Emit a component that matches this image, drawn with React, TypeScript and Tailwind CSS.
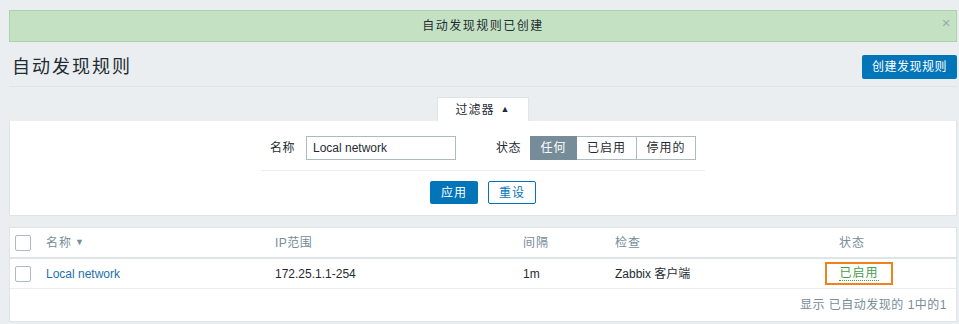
import React from "react";

const font = "font-['Liberation_Sans','Noto_Sans_CJK_SC',sans-serif]";

const Checkbox: React.FC = () => (
  <span className="block w-[16px] h-[16px] border border-[#acbbc2] rounded-[2px] bg-white" />
);

export default function App() {
  return (
    <div className={`${font} min-h-screen w-[959px] bg-[#ebeef0] pl-[9px] pr-[2px] pt-[10px] text-[12px] text-[#1f2c33]`}>
      {/* success message */}
      <div className="relative flex h-[32px] items-center justify-center border border-[#a9d3a8] bg-[#c4e2c3] tracking-[1.5px]">
        自动发现规则已创建
        <span className="absolute right-[4px] top-[4px] text-[15px] leading-none text-[#9aaba5]">×</span>
      </div>

      {/* header */}
      <div className="flex items-center justify-between border-b border-[#dfe4e7] pb-[7px] pt-[13px]">
        <h1 className="pl-[3px] text-[18px] leading-[24px] tracking-[2px]">自动发现规则</h1>
        <button className="h-[24px] w-[95px] rounded-[2px] bg-[#0275b8] text-[12px] tracking-[0.5px] text-white">
          创建发现规则
        </button>
      </div>

      {/* filter tab */}
      <div className="mt-[10px] flex justify-center">
        <div className="flex h-[24px] w-[92px] items-center justify-center gap-[6px] border border-b-0 border-[#dfe4e7] bg-white tracking-[1px]">
          过滤器 <span className="text-[9px]">▲</span>
        </div>
      </div>

      {/* filter panel */}
      <div className="flex flex-col items-center border border-t-0 border-[#dfe4e7] bg-white pb-[11px] pt-[15px]">
        <div className="flex h-[24px] items-center">
          <span className="tracking-[0.5px]">名称</span>
          <div className="ml-[11px] flex h-[24px] w-[150px] items-center border border-[#acbbc2] pl-[6px]">
            Local network
          </div>
          <span className="ml-[40px] tracking-[0.5px]">状态</span>
          <div className="ml-[9px] flex h-[24px]">
            <span className="flex w-[47px] items-center justify-center border border-[#768d99] bg-[#768d99] tracking-[1px] text-white">任何</span>
            <span className="flex w-[60px] items-center justify-center border border-l-0 border-[#acbbc2] tracking-[1px]">已启用</span>
            <span className="flex w-[59px] items-center justify-center border border-l-0 border-[#acbbc2] tracking-[1px]">停用的</span>
          </div>
        </div>
        <div className="mt-[10px] h-px w-[444px] bg-[#ebeef0]" />
        <div className="mt-[10px] flex gap-[10px]">
          <button className="h-[23px] w-[48px] rounded-[2px] bg-[#0275b8] tracking-[1px] text-white">应用</button>
          <button className="h-[23px] w-[48px] rounded-[2px] border border-[#0275b8] bg-white tracking-[1px] text-[#0275b8]">重设</button>
        </div>
      </div>

      {/* table */}
      <div className="mt-[11px] border border-[#dfe4e7] bg-white">
        <div className="grid h-[31px] grid-cols-[36px_229px_248px_92px_180px_114px_1fr] items-center border-b-2 border-[#dfe4e7] text-[#768d99]">
          <div className="pl-[5px]"><Checkbox /></div>
          <div className="flex items-center gap-[3px] tracking-[1px]">
            <span>名称</span>
            <span className="text-[9px]">▼</span>
          </div>
          <div className="tracking-[0.5px]">IP范围</div>
          <div className="tracking-[1px]">间隔</div>
          <div className="tracking-[1px]">检查</div>
          <div className="text-center tracking-[1px]">状态</div>
          <div />
        </div>
        <div className="grid h-[30px] grid-cols-[36px_229px_248px_92px_180px_114px_1fr] items-center border-b border-[#ebeef0]">
          <div className="pl-[5px]"><Checkbox /></div>
          <div className="text-[#1b6fae]">Local network</div>
          <div>172.25.1.1-254</div>
          <div>1m</div>
          <div>Zabbix 客户端</div>
          <div className="flex pl-[30px]">
            <span className="flex h-[23px] w-[68px] items-center justify-center border-2 border-[#f0821e]">
              <span className="border-b border-dotted border-[#429e47] leading-[14px] tracking-[1px] text-[#429e47]">已启用</span>
            </span>
          </div>
          <div />
        </div>
        <div className="flex h-[32px] items-center justify-end pr-[9px] tracking-[0.5px] text-[#768d99]">
          显示 已自动发现的 1中的1
        </div>
      </div>
    </div>
  );
}
